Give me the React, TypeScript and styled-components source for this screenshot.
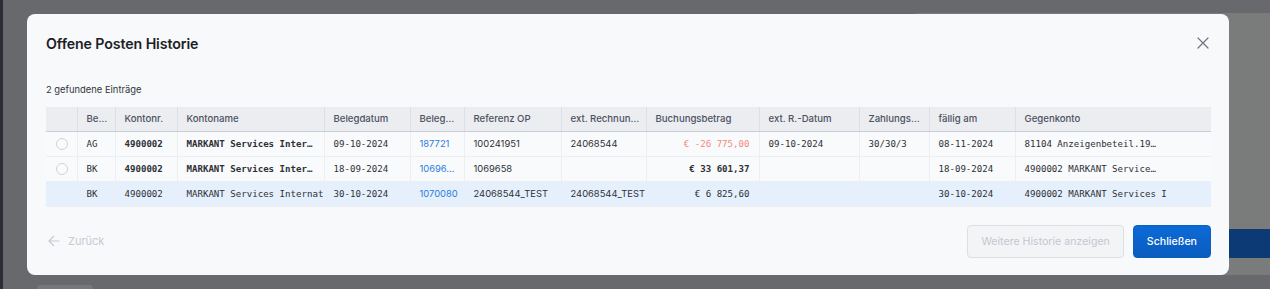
import React from "react";
import styled, { createGlobalStyle } from "styled-components";

const Global = createGlobalStyle`
  * { box-sizing: border-box; }
  html, body { margin: 0; padding: 0; }
  body {
    width: 1270px;
    height: 289px;
    overflow: hidden;
    background: #68696d;
    font-family: Inter, "Noto Sans", sans-serif;
  }
`;

const Page = styled.div`
  position: relative;
  width: 1270px;
  height: 289px;
  display: flex;
  overflow: hidden;
`;

const Rail = styled.div`
  width: 3px;
  flex: none;
  background: #2c2e35;
`;

const Backdrop = styled.div`
  flex: 1;
  display: flex;
  flex-direction: column;
  padding-top: 13px;
`;

const BgCard = styled.div`
  flex: none;
  align-self: flex-end;
  width: 400px;
  height: 262px;
  margin-right: -40px;
  background: #7a7b7b;
  border-radius: 8px;
  display: flex;
  flex-direction: column;
  justify-content: flex-end;
  padding: 0 0 17px 0;
`;

const BgButton = styled.div`
  margin-left: 164px;
  height: 29px;
  background: #0c3a74;
  border-radius: 4px;
  color: #8d99ac;
  font-size: 11px;
  display: flex;
  align-items: center;
  padding-left: 16px;
  white-space: nowrap;
`;

const BgTab = styled.div`
  flex: none;
  margin: 10px 0 0 34px;
  width: 56px;
  height: 10px;
  background: #77787a;
  border-radius: 4px 4px 0 0;
`;

const Modal = styled.div`
  position: absolute;
  left: 27px;
  top: 14px;
  width: 1202px;
  height: 261px;
  background: #f8f9fb;
  border-radius: 8px;
  padding: 19px 18px 0 19px;
  display: flex;
  flex-direction: column;
`;

const HeaderRow = styled.div`
  display: flex;
  align-items: center;
  justify-content: space-between;
  height: 20px;
`;

const Title = styled.h2`
  margin: 0;
  font-size: 14.2px;
  font-weight: 600;
  color: #1b1e25;
  letter-spacing: -0.1px;
`;

const CloseBtn = styled.button`
  border: 0;
  background: transparent;
  padding: 0;
  width: 14px;
  height: 14px;
  margin-right: 1px;
  display: flex;
  align-items: center;
  justify-content: center;
  color: #707480;
`;

const Count = styled.div`
  margin-top: 31px;
  font-size: 9.4px;
  line-height: 12px;
  color: #30343b;
`;

const Table = styled.table`
  margin-top: 11px;
  width: 1165px;
  table-layout: fixed;
  border-collapse: collapse;
`;

const Th = styled.th`
  height: 24px;
  background: #ecedf0;
  border-bottom: 1px solid #c9cdd7;
  border-left: 1px solid #dcdfe5;
  font-weight: 500;
  font-size: 9.6px;
  color: #4b5262;
  text-align: left;
  padding: 0 3px 0 9px;
  white-space: nowrap;
  overflow: hidden;
  &:first-child { border-left: 0; }
`;

const Tr = styled.tr<{ $active?: boolean }>`
  background: ${(p) => (p.$active ? "#e5f0fc" : "#f9fafb")};
`;

const Td = styled.td<{
  $mono?: boolean;
  $bold?: boolean;
  $right?: boolean;
  $color?: string;
}>`
  height: 25px;
  border-bottom: 1px solid #eceef2;
  border-left: 1px solid #eceef2;
  padding: ${(p) => (p.$right ? "0 9px 0 3px" : "0 2px 0 9px")};
  font-family: ${(p) =>
    p.$mono ? '"DejaVu Sans Mono", "Liberation Mono", monospace' : 'Inter, "Noto Sans", sans-serif'};
  font-size: ${(p) => (p.$mono ? "9.1px" : "9.4px")};
  font-weight: ${(p) => (p.$bold ? 700 : 400)};
  color: ${(p) => p.$color || "#2d3037"};
  text-align: ${(p) => (p.$right ? "right" : "left")};
  white-space: nowrap;
  overflow: hidden;
  &:first-child { border-left: 0; }
`;

const Radio = styled.span`
  display: block;
  width: 12px;
  height: 12px;
  margin-left: 1px;
  border-radius: 50%;
  border: 1px solid #cfd3da;
  background: #fbfbfc;
`;

const Footer = styled.div`
  margin-top: 18px;
  display: flex;
  align-items: center;
  justify-content: space-between;
`;

const BackLink = styled.div`
  display: flex;
  align-items: center;
  gap: 8px;
  padding-left: 2px;
  color: #c6cad4;
  font-size: 11px;
`;

const Actions = styled.div`
  display: flex;
  gap: 9px;
`;

const Button = styled.button<{ $primary?: boolean }>`
  height: 33px;
  border-radius: 4px;
  font-family: Inter, "Noto Sans", sans-serif;
  font-size: 10.6px;
  padding: 0 ${(p) => (p.$primary ? "13px" : "13px")};
  border: 1px solid ${(p) => (p.$primary ? "#0b5fc0" : "#dcdfe5")};
  background: ${(p) =>
    p.$primary ? "linear-gradient(#0c6ad6, #0a5cbf)" : "#f3f4f6"};
  color: ${(p) => (p.$primary ? "#ffffff" : "#c3c7cf")};
  font-weight: ${(p) => (p.$primary ? 500 : 400)};
`;

type Row = {
  be: string;
  konto: string;
  name: string;
  datum: string;
  beleg: string;
  ref: string;
  ext: string;
  betrag: string;
  extDatum: string;
  zahl: string;
  faellig: string;
  gegen: string;
  neg?: boolean;
  bold?: boolean;
  active?: boolean;
};

const rows: Row[] = [
  {
    be: "AG",
    konto: "4900002",
    name: "MARKANT Services Inter…",
    datum: "09-10-2024",
    beleg: "187721",
    ref: "100241951",
    ext: "24068544",
    betrag: "€ -26 775,00",
    extDatum: "09-10-2024",
    zahl: "30/30/3",
    faellig: "08-11-2024",
    gegen: "81104 Anzeigenbeteil.19…",
    neg: true,
    bold: true,
  },
  {
    be: "BK",
    konto: "4900002",
    name: "MARKANT Services Inter…",
    datum: "18-09-2024",
    beleg: "10696…",
    ref: "1069658",
    ext: "",
    betrag: "€ 33 601,37",
    extDatum: "",
    zahl: "",
    faellig: "18-09-2024",
    gegen: "4900002 MARKANT Service…",
    bold: true,
  },
  {
    be: "BK",
    konto: "4900002",
    name: "MARKANT Services Internat",
    datum: "30-10-2024",
    beleg: "1070080",
    ref: "24068544_TEST",
    ext: "24068544_TEST",
    betrag: "€ 6 825,60",
    extDatum: "",
    zahl: "",
    faellig: "30-10-2024",
    gegen: "4900002 MARKANT Services I",
    active: true,
  },
];

const widths = [31, 38, 62, 147, 86, 54, 97, 85, 113, 100, 70, 86, 196];
const heads = [
  "",
  "Be…",
  "Kontonr.",
  "Kontoname",
  "Belegdatum",
  "Beleg…",
  "Referenz OP",
  "ext. Rechnun…",
  "Buchungsbetrag",
  "ext. R.-Datum",
  "Zahlungs…",
  "fällig am",
  "Gegenkonto",
];

export default function App() {
  return (
    <>
      <Global />
      <Page>
        <Rail />
        <Backdrop>
          <BgCard>
            <BgButton>Offene Posten</BgButton>
          </BgCard>
          <BgTab />
        </Backdrop>
        <Modal>
          <HeaderRow>
            <Title>Offene Posten Historie</Title>
            <CloseBtn aria-label="Schließen">
              <svg width="12" height="12" viewBox="0 0 12 12" fill="none" stroke="currentColor" strokeWidth="1.2" strokeLinecap="round">
                <path d="M1 1 L11 11 M11 1 L1 11" />
              </svg>
            </CloseBtn>
          </HeaderRow>
          <Count>2 gefundene Einträge</Count>
          <Table>
            <colgroup>
              {widths.map((w, i) => (
                <col key={i} style={{ width: w }} />
              ))}
            </colgroup>
            <thead>
              <tr>
                {heads.map((h, i) => (
                  <Th key={i}>{h}</Th>
                ))}
              </tr>
            </thead>
            <tbody>
              {rows.map((r, i) => (
                <Tr key={i} $active={r.active}>
                  <Td>{!r.active && <Radio />}</Td>
                  <Td $mono>{r.be}</Td>
                  <Td $mono $bold={r.bold}>{r.konto}</Td>
                  <Td $mono $bold={r.bold}>{r.name}</Td>
                  <Td $mono>{r.datum}</Td>
                  <Td $color="#2a7de0">{r.beleg}</Td>
                  <Td>{r.ref}</Td>
                  <Td>{r.ext}</Td>
                  <Td $mono $right $bold={r.bold && !r.neg} $color={r.neg ? "#f48a7e" : undefined}>
                    {r.betrag}
                  </Td>
                  <Td $mono>{r.extDatum}</Td>
                  <Td $mono>{r.zahl}</Td>
                  <Td $mono>{r.faellig}</Td>
                  <Td $mono>{r.gegen}</Td>
                </Tr>
              ))}
            </tbody>
          </Table>
          <Footer>
            <BackLink>
              <svg width="12" height="12" viewBox="0 0 12 12" fill="none" stroke="currentColor" strokeWidth="1.2" strokeLinecap="round" strokeLinejoin="round">
                <path d="M11 6 H1 M5.5 1.5 L1 6 L5.5 10.5" />
              </svg>
              Zurück
            </BackLink>
            <Actions>
              <Button disabled>Weitere Historie anzeigen</Button>
              <Button $primary>Schließen</Button>
            </Actions>
          </Footer>
        </Modal>
      </Page>
    </>
  );
}
